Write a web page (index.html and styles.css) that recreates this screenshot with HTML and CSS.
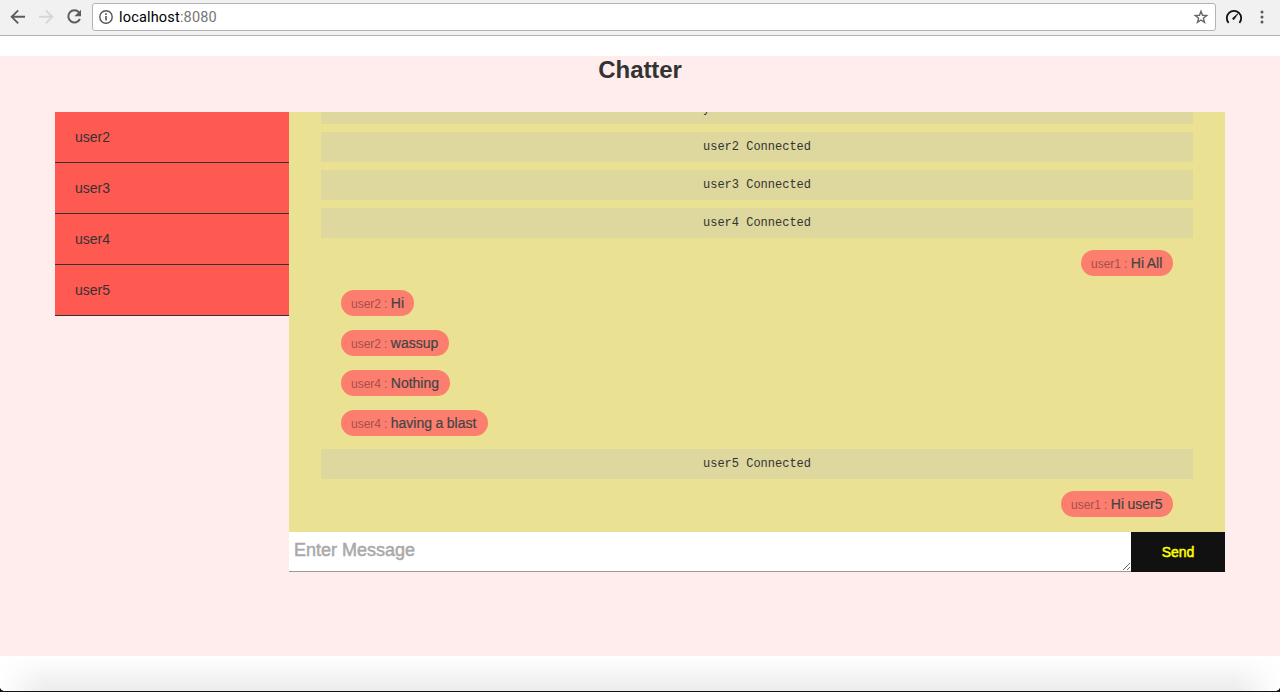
FILE: index.html
```html
<!DOCTYPE html>
<html lang="en">
<head>
<meta charset="utf-8">
<title>Chatter</title>
<link rel="stylesheet" href="styles.css">
</head>
<body>
<div class="window">
  <header class="toolbar">
    <svg class="nav" width="20" height="20" viewBox="0 0 20 20"><path d="M17 9.8H4M10.2 3.3 3.7 9.8l6.5 6.5" fill="none" stroke="#5c5c5c" stroke-width="1.9"/></svg>
    <svg class="nav" width="20" height="20" viewBox="0 0 20 20"><path d="M3 9.8h13M9.8 3.3l6.5 6.5-6.5 6.5" fill="none" stroke="#d6d6d6" stroke-width="1.9"/></svg>
    <svg class="nav" width="20" height="20" viewBox="0 0 20 20"><path d="M15 5.3A6.1 6.1 0 1 0 15.9 12" fill="none" stroke="#5c5c5c" stroke-width="2"/><path d="M17 2.7v6.6h-6.6z" fill="#5c5c5c"/></svg>
    <div class="address">
      <svg class="info" width="14" height="14" viewBox="0 0 14 14"><circle cx="7" cy="7" r="6.2" fill="none" stroke="#555" stroke-width="1.4"/><path d="M6.2 3.3h1.6v1.6H6.2zM6.2 6h1.6v4.6H6.2z" fill="#555"/></svg>
      <span class="url">localhost<span class="port">:8080</span></span>
      <svg class="star" width="16" height="16" viewBox="0 0 16 16"><path d="m8 2.3 1.5 4 4.2.2-3.3 2.7 1.1 4.1L8 11l-3.5 2.3 1.1-4.1-3.3-2.7 4.2-.2z" fill="none" stroke="#666" stroke-width="1.4"/></svg>
    </div>
    <svg class="gauge" width="18" height="18" viewBox="0 0 18 18"><path d="M3.6 14.9A7.2 7.2 0 1 1 14.4 14.9" fill="none" stroke="#111" stroke-width="1.8"/><path d="m7.6 10.2 5.4-4.6-4 6a1.3 1.3 0 0 1-1.4-1.4z" fill="#111" stroke="#111" stroke-width=".6"/></svg>
    <svg class="menu" width="4" height="16" viewBox="0 0 4 16"><g fill="#5a5a5a"><circle cx="2" cy="3" r="1.5"/><circle cx="2" cy="8" r="1.5"/><circle cx="2" cy="13" r="1.5"/></g></svg>
  </header>
  <main class="page">
    <h1 class="title">Chatter</h1>
    <div class="container">
      <ul class="users">
        <li class="user">user2</li>
        <li class="user">user3</li>
        <li class="user">user4</li>
        <li class="user">user5</li>
      </ul>
      <section class="chat">
        <div class="messages">
          <div class="notice">Hey user1 Connected</div>
          <div class="notice">user2 Connected</div>
          <div class="notice">user3 Connected</div>
          <div class="notice">user4 Connected</div>
          <div class="message mine w92"><span class="from">user1 :</span> Hi All</div>
          <div class="message w73"><span class="from">user2 :</span> Hi</div>
          <div class="message w108"><span class="from">user2 :</span> wassup</div>
          <div class="message w109"><span class="from">user4 :</span> Nothing</div>
          <div class="message w147"><span class="from">user4 :</span> having a blast</div>
          <div class="notice late">user5 Connected</div>
          <div class="message mine w112"><span class="from">user1 :</span> Hi user5</div>
        </div>
        <form class="compose">
          <textarea class="input" placeholder="Enter Message"></textarea>
          <button class="send" type="button">Send</button>
        </form>
      </section>
    </div>
  </main>
  <footer class="shade"></footer>
</div>
</body>
</html>
```
FILE: styles.css
```css
* { box-sizing: border-box; }

body {
  margin: 0;
  background: #10151b;
  color: #333;
  font: 14px/20px "Liberation Sans", Arial, sans-serif;
  overflow: hidden;
}

.window {
  display: flex;
  flex-direction: column;
  height: 691px;
  background: #fff;
  border-radius: 0 0 5px 5px;
  overflow: hidden;
}

.toolbar {
  display: flex;
  flex: none;
  align-items: flex-start;
  height: 36px;
  padding: 3px 16px 0 8px;
  background: #f1f1f1;
  border-bottom: 1px solid #b3b3b3;
}

.nav { margin: 4px 8px 0 0; }

.address {
  display: flex;
  align-items: center;
  width: 1124px;
  height: 28px;
  padding: 0 6px;
  background: #fff;
  border: 1px solid #b4b4b4;
  border-radius: 3px;
}

.info { margin-right: 6px; }

.url {
  flex: 1;
  padding-top: 1px;
  color: #000;
  font: 14.5px/20px Roboto, sans-serif;
  letter-spacing: 0.18px;
}

.port { color: #777; }

.gauge { margin: 5px 0 0 9px; }

.menu { margin: 6px 0 0 17px; }

.page {
  flex: none;
  height: 600px;
  margin-top: 20px;
  background: #ffeded;
}

.title {
  margin: 0;
  height: 56px;
  font-size: 24px;
  line-height: 27px;
  letter-spacing: -0.1px;
  text-align: center;
}

.container {
  display: flex;
  align-items: flex-start;
  width: 1170px;
  margin: 0 auto;
}

.users {
  width: 234px;
  margin: 0;
  padding: 0;
  list-style: none;
}

.user {
  height: 51px;
  padding: 15px 20px;
  background: #ff5a52;
  border-bottom: 1px solid #333;
}

.chat { width: 936px; }

.messages {
  display: flex;
  flex-direction: column;
  justify-content: flex-end;
  align-items: flex-start;
  height: 420px;
  padding: 0 32px 15px;
  background: #eae192;
  overflow: hidden;
}

.notice {
  flex: none;
  width: 100%;
  height: 30px;
  margin-bottom: 8px;
  background: #ded79e;
  font: 12px/30px "Courier New", "Liberation Mono", monospace;
  text-align: center;
}

.message {
  flex: none;
  height: 26px;
  margin: 0 20px 14px;
  padding: 0 10px;
  background: #fc7e6f;
  border-radius: 13px;
  color: #444;
  line-height: 26px;
  white-space: nowrap;
  word-spacing: -0.4px;
  -webkit-text-stroke: 0.2px #444;
}

.mine { align-self: flex-end; }

.notice + .message { margin-top: 4px; }

.message:last-child { margin-bottom: 0; }

.late { margin-top: -1px; }

.from {
  color: #a84f47;
  font-size: 12px;
  -webkit-text-stroke: 0;
}

.w73 { width: 73px; }
.w92 { width: 92px; }
.w108 { width: 108px; }
.w109 { width: 109px; }
.w112 { width: 112px; }
.w147 { width: 147px; }

.compose {
  display: flex;
  height: 40px;
}

.input {
  width: 842px;
  height: 40px;
  padding: 5px;
  border: 0;
  border-bottom: 1px solid #999;
  outline: 0;
  font: 18px/26px "Liberation Sans", Arial, sans-serif;
  overflow: hidden;
}

.input::placeholder {
  color: #a9a9a9;
  -webkit-text-stroke: 0.5px #a9a9a9;
}

.send {
  width: 94px;
  padding: 0;
  border: 0;
  background: #111;
  color: #ff0;
  font: 14px/20px "Liberation Sans", Arial, sans-serif;
  -webkit-text-stroke: 0.5px #ff0;
}

.shade {
  flex: 1;
  background:
    linear-gradient(90deg, #fff, transparent 45px, transparent calc(100% - 45px), #fff),
    linear-gradient(#fff, #ececec);
}
```
